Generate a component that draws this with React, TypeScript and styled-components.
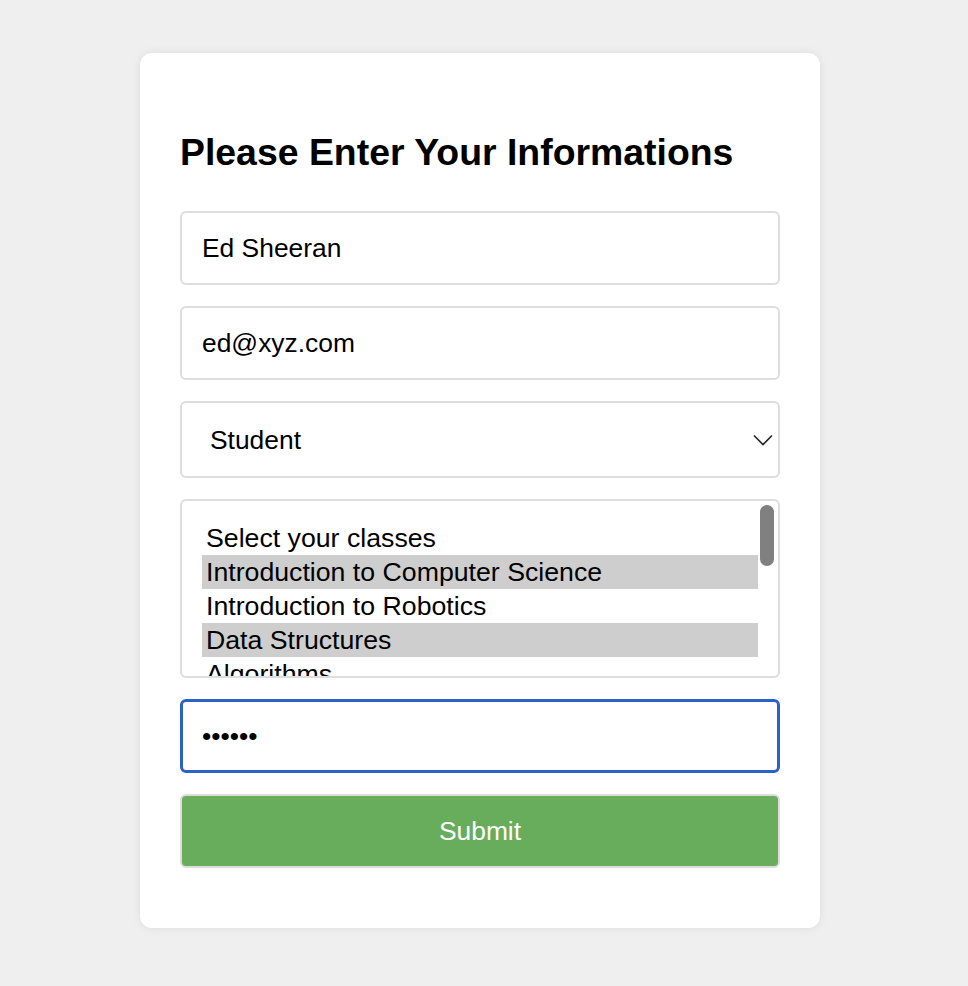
import { createGlobalStyle } from "styled-components";
import styled from "styled-components";

const GlobalStyle = createGlobalStyle`
  html, body {
    margin: 0;
    padding: 0;
    background: #efefef;
    font-family: "Liberation Sans", Arial, sans-serif;
  }
`;

const Page = styled.div`
  display: flex;
  justify-content: center;
  padding: 53px 8px 58px 0;
`;

const Card = styled.div`
  width: 680px;
  box-sizing: border-box;
  padding: 40px 40px 60px;
  background: #ffffff;
  border-radius: 12px;
  box-shadow: 0 0 10px rgba(0, 0, 0, 0.08);
`;

const Title = styled.h2`
  margin: 38px 0 37px;
  font-size: 37.4px;
  font-weight: bold;
  color: #000;
`;

const Form = styled.form`
  display: flex;
  flex-direction: column;
  gap: 21px;
`;

const TextInput = styled.input<{ $focused?: boolean }>`
  box-sizing: border-box;
  width: 100%;
  height: 74px;
  padding: 0 20px;
  font-family: inherit;
  font-size: 26.4px;
  color: #000;
  background: #fff;
  border: ${(p) => (p.$focused ? "3px solid #2a62c9" : "2px solid #dddddd")};
  padding-left: ${(p) => (p.$focused ? "19px" : "20px")};
  border-radius: 6px;
  outline: none;
`;

const SelectWrap = styled.div`
  position: relative;
`;

const Select = styled.select`
  box-sizing: border-box;
  width: 100%;
  height: 77px;
  padding: 0 28px;
  appearance: none;
  font-family: inherit;
  font-size: 26.4px;
  color: #000;
  background: #fff;
  border: 2px solid #dddddd;
  border-radius: 6px;
  outline: none;
`;

const Chevron = styled.svg`
  position: absolute;
  right: 7px;
  top: 33px;
  pointer-events: none;
`;

const ListBox = styled.div`
  position: relative;
  box-sizing: border-box;
  height: 179px;
  padding: 20px 20px 0 20px;
  border: 2px solid #dddddd;
  border-radius: 6px;
  overflow: hidden;
`;

const Option = styled.div<{ $selected?: boolean }>`
  height: 34px;
  line-height: 34px;
  padding-left: 4px;
  font-size: 26.7px;
  color: #000;
  white-space: nowrap;
  background: ${(p) => (p.$selected ? "#cecece" : "transparent")};
`;

const Thumb = styled.div`
  position: absolute;
  top: 4px;
  right: 4px;
  width: 14px;
  height: 61px;
  border-radius: 7px;
  background: #808080;
`;

const SubmitButton = styled.button`
  box-sizing: border-box;
  width: 100%;
  height: 74px;
  font-family: inherit;
  font-size: 26.4px;
  color: #fff;
  background: #68ad5c;
  border: 2px solid #dddddd;
  border-radius: 6px;
  cursor: pointer;
`;

const classes = [
  { label: "Select your classes", selected: false },
  { label: "Introduction to Computer Science", selected: true },
  { label: "Introduction to Robotics", selected: false },
  { label: "Data Structures", selected: true },
  { label: "Algorithms", selected: false },
];

export default function App() {
  return (
    <>
      <GlobalStyle />
      <Page>
        <Card>
          <Title>Please Enter Your Informations</Title>
          <Form onSubmit={(e) => e.preventDefault()}>
            <TextInput type="text" defaultValue="Ed Sheeran" />
            <TextInput type="email" defaultValue="ed@xyz.com" />
            <SelectWrap>
              <Select defaultValue="student">
                <option value="student">Student</option>
                <option value="teacher">Teacher</option>
              </Select>
              <Chevron width="20" height="12" viewBox="0 0 20 12">
                <path d="M1 1.5 L10 10.5 L19 1.5" fill="none" stroke="#222" strokeWidth="1.6" />
              </Chevron>
            </SelectWrap>
            <ListBox role="listbox">
              {classes.map((c) => (
                <Option key={c.label} $selected={c.selected}>
                  {c.label}
                </Option>
              ))}
              <Thumb />
            </ListBox>
            <TextInput type="password" defaultValue="123456" $focused />
            <SubmitButton type="submit">Submit</SubmitButton>
          </Form>
        </Card>
      </Page>
    </>
  );
}
